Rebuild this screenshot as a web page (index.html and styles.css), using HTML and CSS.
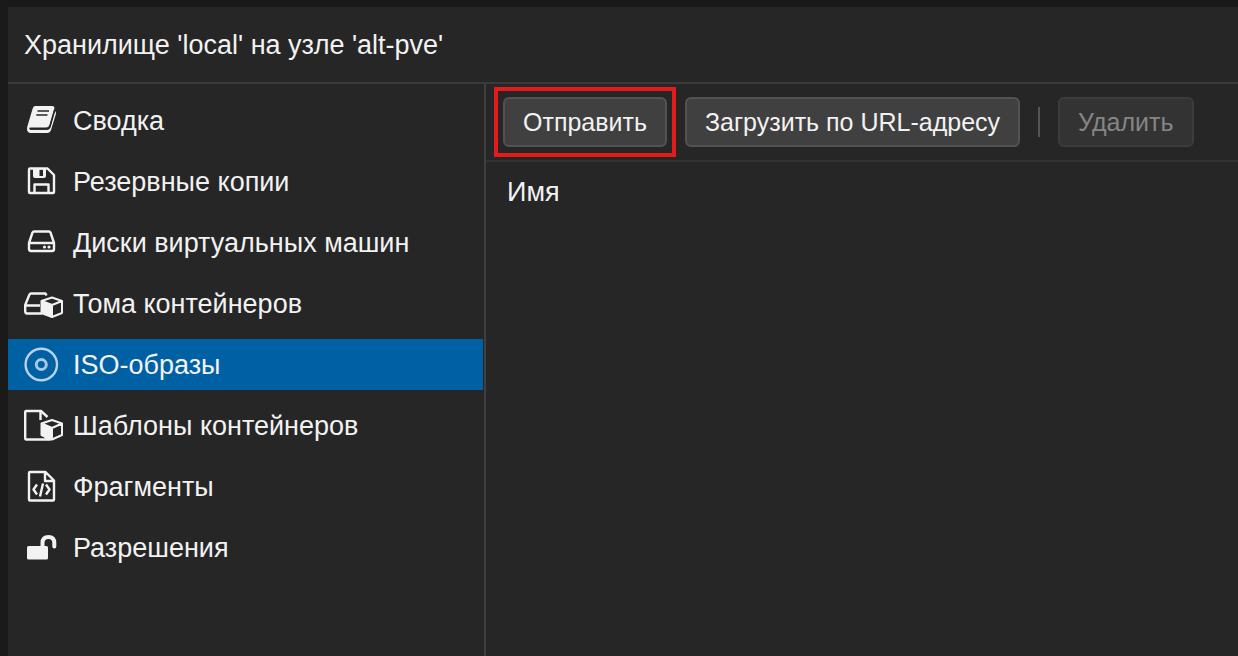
FILE: index.html
```html
<!DOCTYPE html>
<html lang="ru">
<head>
<meta charset="utf-8">
<meta name="viewport" content="width=device-width, initial-scale=1">
<title>Хранилище 'local' на узле 'alt-pve'</title>
<link rel="stylesheet" href="styles.css">
</head>
<body>
<div class="panel">
  <header class="panel-header"><h1 class="panel-title">Хранилище 'local' на узле 'alt-pve'</h1></header>
  <div class="panel-body">
    <nav class="sidebar">
      <a class="nav-item" href="#summary">
        <svg class="nav-icon" viewBox="0 0 40 35" aria-hidden="true">
          <path fill="currentColor" d="M11 3H28Q31 3 30.300 6L25.500 22Q24.700 24.600 22 24.600H6.500Q5.200 24.600 5.200 25.600Q5.300 26.700 7 26.700H23Q25.300 26.700 26 24.500L31 8Q32.400 9 31.900 11L27 27Q26 30 23 30H7Q3.200 30 3 26Q3 24.500 3.500 23L8.500 6Q9.300 3 11 3Z"/>
          <path class="icon-cutout" d="M13.500 8H25M12.300 12H23.500M30.800 6.500 26 23.500Q25.200 26 23 26H6"/>
        </svg>Сводка</a>
      <a class="nav-item" href="#backups">
        <svg class="nav-icon" viewBox="0 0 40 35" aria-hidden="true">
          <path class="icon-line" d="M6 4.500H23.500L30 11V28Q30 29 29 29H6Q5 29 5 28V5.500Q5 4.500 6 4.500ZM10.500 29V20.500H24.500V29"/>
          <path fill="currentColor" fill-rule="evenodd" d="M9 4H22V12Q22 14 20 14H11Q9 14 9 12ZM15.500 5.500V12H19V5.500Z"/>
        </svg>Резервные копии</a>
      <a class="nav-item" href="#disks">
        <svg class="nav-icon" viewBox="0 0 40 35" aria-hidden="true">
          <path class="icon-line" d="M5 18 8.500 7.500Q9 6.500 10 6.500H25Q26 6.500 26.500 7.500L30 18V24Q30 26 28 26H7Q5 26 5 24ZM5 18H30"/>
          <circle cx="20.500" cy="22" r="1.600" fill="currentColor"/><circle cx="25" cy="22" r="1.600" fill="currentColor"/>
        </svg>Диски виртуальных машин</a>
      <a class="nav-item" href="#volumes">
        <svg class="nav-icon" viewBox="0 0 40 35" aria-hidden="true">
          <path class="icon-line" d="M22.500 9.500 21.500 7.500H7Q6 7.500 5.500 8.500L1.200 19V25Q1.200 27.500 3 27.500H18M1.200 19.500H16"/>
          <path fill="currentColor" d="M17 14 28 18.500V31L17 26Z"/>
          <path class="icon-line icon-cube" d="M17.500 15 28 11.500 38 15V27L28 31 17.500 27ZM17.500 15 28 19 38 15M28 19V30"/>
        </svg>Тома контейнеров</a>
      <a class="nav-item nav-item-active" href="#iso" aria-current="page">
        <svg class="nav-icon" viewBox="0 0 40 35" aria-hidden="true">
          <circle class="icon-disc" cx="17.300" cy="17.500" r="15.700"/><circle class="icon-disc-hub" cx="17.300" cy="17.500" r="5"/>
        </svg>ISO-образы</a>
      <a class="nav-item" href="#templates">
        <svg class="nav-icon" viewBox="0 0 40 35" aria-hidden="true">
          <path class="icon-line" d="M23.500 9 17 3H2.200Q1.200 3 1.200 4V30Q1.200 31.500 2.200 31.500H26L20 28M16.500 3V12"/>
          <path fill="currentColor" d="M17 15.500 28 20V32L17 27.500Z"/>
          <path class="icon-line icon-cube" d="M17.500 15.500 28 12 38 15.500V27L28 31.500 17.500 27ZM17.500 15.500 28 20 38 15.500M28 20V31"/>
        </svg>Шаблоны контейнеров</a>
      <a class="nav-item" href="#snippets">
        <svg class="nav-icon" viewBox="0 0 40 35" aria-hidden="true">
          <path class="icon-line" d="M6 3H21.500L30 11.500V30.500Q30 31.500 29 31.500H6Q5 31.500 5 30.500V4Q5 3 6 3ZM21 3V12H30M13 15.500 9.500 20.500 13 25.500M22 15.500 25.500 20.500 22 25.500M19 14.500 16 27.500"/>
        </svg>Фрагменты</a>
      <a class="nav-item" href="#permissions">
        <svg class="nav-icon" viewBox="0 0 40 35" aria-hidden="true">
          <rect x="3" y="16" width="21" height="13.500" rx="1.500" fill="currentColor"/>
          <path class="icon-shackle" d="M18.500 17V13Q18.500 7 24.500 7Q30.300 7 30.300 13V16.500"/>
        </svg>Разрешения</a>
    </nav>
    <main class="content">
      <div class="toolbar" role="toolbar">
        <button class="button button-marked" type="button">Отправить</button>
        <button class="button" type="button">Загрузить по URL-адресу</button>
        <span class="toolbar-separator"></span>
        <button class="button" type="button" disabled>Удалить</button>
      </div>
      <table class="file-table">
        <thead><tr><th scope="col">Имя</th></tr></thead>
      </table>
    </main>
  </div>
</div>
</body>
</html>
```
FILE: styles.css
```css
* { box-sizing: border-box; }

body {
  margin: 0;
  background: #1a1a1a;
  color: #f2f2f2;
  font: 27px/32px "Liberation Sans", Arial, sans-serif;
}

.panel {
  display: flex;
  flex-direction: column;
  min-height: 100vh;
  padding: 7px 0 0 8px;
}

.panel-header {
  padding: 22px 16px 21px;
  background: #262626;
  border-bottom: 2px solid #3a3a3a;
}

.panel-title {
  margin: 0;
  font-size: 27px;
  line-height: 32px;
  font-weight: normal;
}

.panel-body {
  display: flex;
  flex: 1;
  background: #262626;
}

.sidebar {
  display: flex;
  flex: 0 0 478px;
  flex-direction: column;
  gap: 10px;
  padding: 11px 1px 11px 0;
  border-right: 2px solid #3f3f3f;
}

.nav-item {
  display: flex;
  align-items: center;
  gap: 9px;
  padding: 8px 16px;
  height: 51px;
  color: inherit;
  text-decoration: none;
  white-space: nowrap;
}

.nav-item-active { background: #0060a4; }

.nav-icon {
  flex: none;
  width: 40px;
  height: 35px;
}

.icon-line, .icon-disc, .icon-disc-hub, .icon-shackle, .icon-cutout {
  fill: none;
  stroke: currentColor;
  stroke-width: 2.4;
  stroke-linejoin: round;
}

.icon-cube { stroke-width: 2; }
.icon-disc { stroke: #b9d2e6; }
.icon-disc-hub { stroke: #a9c9e1; stroke-width: 3; }
.icon-shackle { stroke-width: 4; stroke-linecap: round; }
.icon-cutout { stroke: #262626; stroke-width: 1.6; }

.content { flex: 1; min-width: 0; }

.toolbar {
  display: flex;
  align-items: center;
  gap: 18px;
  padding: 13px 17px;
  border-bottom: 2px solid #323232;
}

.button {
  position: relative;
  flex: none;
  height: 50px;
  padding: 0 18px;
  border: 2px solid #525252;
  border-radius: 6px;
  background: #404040;
  color: #f2f2f2;
  font: inherit;
  font-size: 25px;
  white-space: nowrap;
}

.button:disabled {
  border-color: #3c3c3c;
  background: #333;
  color: #858585;
}

.button-marked::after {
  content: "";
  position: absolute;
  inset: -12px -11px;
  border: 4px solid #e31b1b;
  pointer-events: none;
}

.toolbar-separator {
  flex: none;
  width: 2px;
  height: 30px;
  background: #555;
}

.file-table { width: 100%; border-collapse: collapse; }

.file-table th {
  padding: 14px 21px;
  font-weight: normal;
  text-align: left;
}
```
